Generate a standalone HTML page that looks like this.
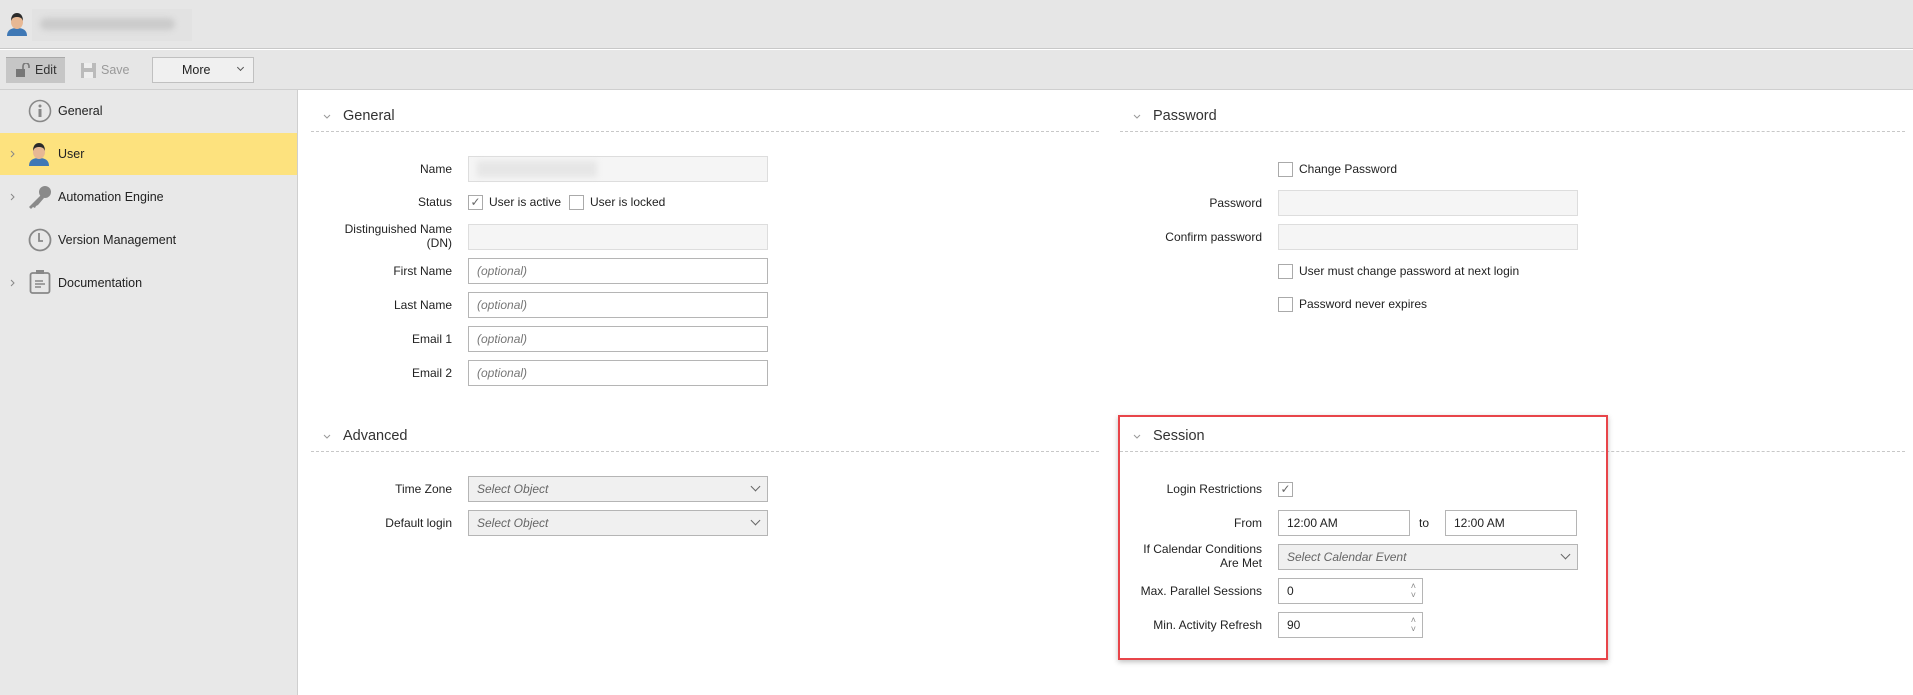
<!DOCTYPE html>
<html><head><meta charset="utf-8"><style>
*{box-sizing:border-box;margin:0;padding:0}
body{width:1913px;height:695px;overflow:hidden;background:#fff;font-family:"Liberation Sans",Arial,sans-serif;font-size:12px;color:#222;position:relative}
.a{position:absolute}
.hdr{left:0;top:0;width:1913px;height:49px;background:#e6e6e6;border-bottom:1px solid #c8c8c8}
.tb{left:0;top:50px;width:1913px;height:40px;background:#e6e6e6;border-bottom:1px solid #cfcfcf}
.side{left:0;top:90px;width:298px;height:605px;background:#e8e8e8;border-right:1px solid #cfcfcf}
.item{left:0;width:297px;height:43px;font-size:12.5px}
.item span{position:absolute;left:58px;top:50%;transform:translateY(-50%)}
.arr{position:absolute;left:10px;top:50%;margin-top:-4px}
.lbl{text-align:right;width:300px;font-size:12px;line-height:14px}
.inp{height:26px;border:1px solid #b5b5b5;background:#fff;font-size:12px;padding-left:8px;line-height:24px}
.dis{background:#f5f5f5;border-color:#ddd}
.sel{background:#f0f0f0;border-color:#b5b5b5;color:#666;font-style:italic}
.opt{color:#777;font-style:italic}
.cb{width:15px;height:15px;border:1px solid #aaa;background:#fff}
.ttl{font-size:14.5px;color:#333}
.chev{width:8px;height:5px}
.dash{height:0;border-top:1px dashed #c8c8c8}
.dd{position:absolute;right:8px;top:6px;width:7px;height:7px;border-right:1.5px solid #666;border-bottom:1.5px solid #666;transform:rotate(45deg)}
.spin{position:absolute;right:6px;font-size:9px;color:#888;line-height:9px;top:3px}
</style></head><body>
<div class="a hdr"></div>
<svg class="a" style="left:6px;top:12px" width="22" height="24" viewBox="0 0 22 24"><path d="M1 24c0-6 4-8 10-8s10 2 10 8z" fill="#3f78b5"/><ellipse cx="11" cy="10" rx="6" ry="7" fill="#e7b894"/><path d="M5 9c0-6 3-8 6-8s6 2 6 8c-1-3-3-4-6-4s-5 1-6 4z" fill="#2b2b2b"/></svg>
<div class="a" style="left:32px;top:9px;width:160px;height:32px;background:#e2e2e2"><div style="margin:9px 8px;width:135px;height:12px;background:#cbcbcb;border-radius:6px;filter:blur(3px)"></div></div>
<div class="a tb"></div>
<div class="a" style="left:6px;top:57px;width:59px;height:26px;background:#c6c6c6;border-top:1px solid #aaa"></div>
<svg class="a" style="left:16px;top:63px" width="14" height="14" viewBox="0 0 14 14"><rect x="0" y="6" width="9" height="8" fill="#777"/><path d="M7 6V3a3 3 0 016 0v2" stroke="#777" stroke-width="1.6" fill="none"/></svg>
<div class="a" style="left:35px;top:63px;font-size:12.5px;color:#333">Edit</div>
<svg class="a" style="left:81px;top:63px" width="15" height="15" viewBox="0 0 15 15"><rect x="0" y="0" width="15" height="15" fill="#bbb"/><rect x="3" y="0" width="8" height="5" fill="#eee"/><rect x="3" y="9" width="9" height="6" fill="#eee"/></svg>
<div class="a" style="left:101px;top:63px;font-size:12.5px;color:#999">Save</div>
<div class="a" style="left:152px;top:57px;width:102px;height:26px;border:1px solid #c0c0c0;background:#f0f0f0"><span style="position:absolute;left:29px;top:5px;font-size:12.5px">More</span><span style="position:absolute;right:10px;top:7px;width:5px;height:5px;border-right:1.3px solid #555;border-bottom:1.3px solid #555;transform:rotate(45deg)"></span></div>
<div class="a side"></div>
<div class="a item" style="top:89px"><svg style="position:absolute;left:28px;top:10px" width="24" height="24"><circle cx="12" cy="12" r="10.5" fill="none" stroke="#888" stroke-width="1.6"/><circle cx="12" cy="7" r="1.5" fill="#888"/><rect x="10.5" y="10" width="3" height="8" fill="#888"/></svg><span>General</span></div>
<div class="a item" style="top:133px;height:42px;background:#fde27e"><svg class="arr" width="5" height="8"><path d="M1 1l3 3-3 3" stroke="#888" fill="none"/></svg><svg style="position:absolute;left:28px;top:8px" width="22" height="26" viewBox="0 0 22 24"><path d="M1 24c0-6 4-8 10-8s10 2 10 8z" fill="#3f78b5"/><ellipse cx="11" cy="10" rx="6" ry="7" fill="#e7b894"/><path d="M5 9c0-6 3-8 6-8s6 2 6 8c-1-3-3-4-6-4s-5 1-6 4z" fill="#2b2b2b"/></svg><span>User</span></div>
<div class="a item" style="top:175px"><svg class="arr" width="5" height="8"><path d="M1 1l3 3-3 3" stroke="#888" fill="none"/></svg><svg style="position:absolute;left:27px;top:9px" width="26" height="26" viewBox="0 0 26 26"><circle cx="18" cy="8" r="6" fill="#8a8a8a"/><path d="M14 11L2 23l2 2 2-2 2 1 1-2 2-1 6-7z" fill="#8a8a8a"/></svg><span>Automation Engine</span></div>
<div class="a item" style="top:218px"><svg style="position:absolute;left:28px;top:10px" width="24" height="24"><circle cx="12" cy="12" r="10.5" fill="none" stroke="#888" stroke-width="1.8"/><path d="M11 5v8h4" stroke="#888" stroke-width="1.8" fill="none"/></svg><span>Version Management</span></div>
<div class="a item" style="top:261px"><svg class="arr" width="5" height="8"><path d="M1 1l3 3-3 3" stroke="#888" fill="none"/></svg><svg style="position:absolute;left:29px;top:8px" width="22" height="26"><rect x="1.5" y="4" width="19" height="20" rx="2" fill="none" stroke="#888" stroke-width="1.8"/><rect x="7" y="1" width="8" height="4" fill="#888"/><path d="M6 12h8M6 15h10M6 18h6" stroke="#888" stroke-width="1.5"/></svg><span>Documentation</span></div>

<!-- General -->
<svg class="a chev" style="left:323px;top:114px"><path d="M1 1l3 3 3-3" stroke="#999" fill="none"/></svg>
<div class="a ttl" style="left:343px;top:108px">General</div>
<div class="a dash" style="left:311px;top:131px;width:788px"></div>
<div class="a lbl" style="left:152px;top:162px">Name</div>
<div class="a inp dis" style="left:468px;top:156px;width:300px"><div style="margin-top:4px;width:120px;height:16px;background:#e6e6e6;filter:blur(3px)"></div></div>
<div class="a lbl" style="left:152px;top:195px">Status</div>
<div class="a cb" style="left:468px;top:195px;color:#666;font-size:12px;line-height:13px;text-align:center">✓</div>
<div class="a" style="left:489px;top:195px">User is active</div>
<div class="a cb" style="left:569px;top:195px"></div>
<div class="a" style="left:590px;top:195px">User is locked</div>
<div class="a lbl" style="left:152px;top:222px">Distinguished Name<br>(DN)</div>
<div class="a inp dis" style="left:468px;top:224px;width:300px"></div>
<div class="a lbl" style="left:152px;top:264px">First Name</div>
<div class="a inp opt" style="left:468px;top:258px;width:300px">(optional)</div>
<div class="a lbl" style="left:152px;top:298px">Last Name</div>
<div class="a inp opt" style="left:468px;top:292px;width:300px">(optional)</div>
<div class="a lbl" style="left:152px;top:332px">Email 1</div>
<div class="a inp opt" style="left:468px;top:326px;width:300px">(optional)</div>
<div class="a lbl" style="left:152px;top:366px">Email 2</div>
<div class="a inp opt" style="left:468px;top:360px;width:300px">(optional)</div>

<!-- Password -->
<svg class="a chev" style="left:1133px;top:114px"><path d="M1 1l3 3 3-3" stroke="#999" fill="none"/></svg>
<div class="a ttl" style="left:1153px;top:108px">Password</div>
<div class="a dash" style="left:1120px;top:131px;width:785px"></div>
<div class="a cb" style="left:1278px;top:162px"></div>
<div class="a" style="left:1299px;top:162px">Change Password</div>
<div class="a lbl" style="left:962px;top:196px">Password</div>
<div class="a inp dis" style="left:1278px;top:190px;width:300px"></div>
<div class="a lbl" style="left:962px;top:230px">Confirm password</div>
<div class="a inp dis" style="left:1278px;top:224px;width:300px"></div>
<div class="a cb" style="left:1278px;top:264px"></div>
<div class="a" style="left:1299px;top:264px">User must change password at next login</div>
<div class="a cb" style="left:1278px;top:297px"></div>
<div class="a" style="left:1299px;top:297px">Password never expires</div>

<!-- Advanced -->
<svg class="a chev" style="left:323px;top:434px"><path d="M1 1l3 3 3-3" stroke="#999" fill="none"/></svg>
<div class="a ttl" style="left:343px;top:428px">Advanced</div>
<div class="a dash" style="left:311px;top:451px;width:788px"></div>
<div class="a lbl" style="left:152px;top:482px">Time Zone</div>
<div class="a inp sel" style="left:468px;top:476px;width:300px">Select Object<i class="dd"></i></div>
<div class="a lbl" style="left:152px;top:516px">Default login</div>
<div class="a inp sel" style="left:468px;top:510px;width:300px">Select Object<i class="dd"></i></div>

<!-- Session -->
<div class="a dash" style="left:1120px;top:451px;width:785px"></div>
<div class="a" style="left:1118px;top:415px;width:490px;height:245px;border:2px solid #e8454a;box-shadow:0 2px 5px rgba(0,0,0,.25)"></div>
<svg class="a chev" style="left:1133px;top:434px"><path d="M1 1l3 3 3-3" stroke="#999" fill="none"/></svg>
<div class="a ttl" style="left:1153px;top:428px">Session</div>
<div class="a lbl" style="left:962px;top:482px">Login Restrictions</div>
<div class="a cb" style="left:1278px;top:482px;color:#666;font-size:12px;line-height:13px;text-align:center">✓</div>
<div class="a lbl" style="left:962px;top:516px">From</div>
<div class="a inp" style="left:1278px;top:510px;width:132px">12:00 AM</div>
<div class="a" style="left:1419px;top:516px">to</div>
<div class="a inp" style="left:1445px;top:510px;width:132px">12:00 AM</div>
<div class="a lbl" style="left:962px;top:542px">If Calendar Conditions<br>Are Met</div>
<div class="a inp sel" style="left:1278px;top:544px;width:300px">Select Calendar Event<i class="dd"></i></div>
<div class="a lbl" style="left:962px;top:584px">Max. Parallel Sessions</div>
<div class="a inp" style="left:1278px;top:578px;width:145px">0<span class="spin">˄<br>˅</span></div>
<div class="a lbl" style="left:962px;top:618px">Min. Activity Refresh</div>
<div class="a inp" style="left:1278px;top:612px;width:145px">90<span class="spin">˄<br>˅</span></div>
</body></html>
